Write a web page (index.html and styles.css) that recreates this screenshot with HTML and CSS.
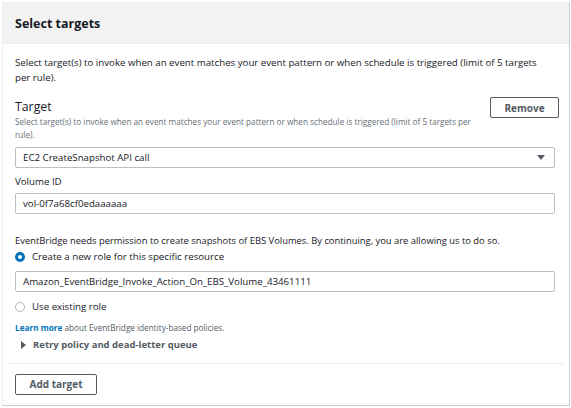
FILE: index.html
```html
<!DOCTYPE html>
<html>
<head>
<meta charset="utf-8">
<link rel="stylesheet" href="styles.css">
</head>
<body>
<div class="card">
  <div class="card-header">Select targets</div>
  <div class="card-body">
    <p class="intro">Select target(s) to invoke when an event matches your event pattern or when schedule is triggered (limit of 5 targets per rule).</p>
    <div class="target-head">
      <div class="target-text">
        <div class="target-title">Target</div>
        <div class="target-desc">Select target(s) to invoke when an event matches your event pattern or when schedule is triggered (limit of 5 targets per rule).</div>
      </div>
      <button class="btn btn-remove">Remove</button>
    </div>
    <div class="field select">
      <span>EC2 CreateSnapshot API call</span>
      <span class="caret"></span>
    </div>
    <div class="label">Volume ID</div>
    <div class="field input">vol-0f7a68cf0edaaaaaa</div>
    <div class="perm">EventBridge needs permission to create snapshots of EBS Volumes. By continuing, you are allowing us to do so.</div>
    <div class="radio-row new-role"><span class="radio checked"></span>Create a new role for this specific resource</div>
    <div class="field input role-input">Amazon_EventBridge_Invoke_Action_On_EBS_Volume_43461111</div>
    <div class="radio-row existing"><span class="radio"></span>Use existing role</div>
    <div class="learn"><span class="link">Learn more</span> about EventBridge identity-based policies.</div>
    <div class="retry"><span class="tri"></span>Retry policy and dead-letter queue</div>
  </div>
  <div class="card-footer">
    <button class="btn btn-add">Add target</button>
  </div>
</div>
</body>
</html>
```
FILE: styles.css
```css
* { box-sizing: border-box; }
html, body { margin: 0; padding: 0; background: #ffffff; }
body {
  font-family: "Open Sans", "Liberation Sans", sans-serif;
  color: #16191f;
  padding: 2px 0 0 2px;
}
.card {
  width: 568px;
  height: 404px;
  border: 1px solid #eceeee;
  border-right-color: #c9cdce;
  border-bottom-color: #c9cdce;
  background: #fff;
  display: flex;
  flex-direction: column;
}
.card-header {
  background: #f2f2f2;
  height: 41px;
  padding: 0 12px;
  display: flex;
  align-items: center;
  font-weight: 700;
  font-size: 12.5px;
  border-bottom: 1px solid #eaeded;
}
.card-body {
  padding: 11px 12px 0 12px;
}
.intro {
  margin: 0;
  font-size: 9.7px;
  line-height: 15px;
  width: 535px;
}
.target-head {
  display: flex;
  justify-content: space-between;
  align-items: flex-start;
  margin-top: 14px;
}
.target-text { width: 470px; }
.target-title {
  font-size: 12.3px;
  line-height: 16px;
}
.target-desc {
  font-size: 8.2px;
  line-height: 13px;
  color: #687078;
}
.btn {
  font-family: "Open Sans", "Liberation Sans", sans-serif;
  background: #fff;
  border: 1px solid #545b64;
  border-radius: 2px;
  font-weight: 700;
  font-size: 10px;
  color: #545b64;
  padding: 0;
}
.btn-remove {
  width: 69px;
  height: 21px;
  margin-top: -2px;
  margin-right: -2px;
}
.field {
  width: 540px;
  height: 21px;
  border: 1px solid #b9c0c1;
  border-radius: 2px;
  font-size: 9.7px;
  padding: 0 7px;
  display: flex;
  align-items: center;
}
.select {
  margin-top: 6px;
  justify-content: space-between;
}
.caret {
  width: 0; height: 0;
  border-left: 4px solid transparent;
  border-right: 4px solid transparent;
  border-top: 5px solid #545b64;
  margin-right: 2px;
}
.label {
  font-size: 9.7px;
  line-height: 14px;
  margin-top: 7px;
}
.input { margin-top: 4px; }
.perm {
  font-size: 9.4px;
  line-height: 14px;
  margin-top: 20px;
}
.radio-row {
  display: flex;
  align-items: center;
  font-size: 9.7px;
  line-height: 16px;
}
.new-role { margin-top: 1px; }
.radio {
  width: 10px;
  height: 10px;
  border-radius: 50%;
  border: 1px solid #aab7b8;
  margin-left: 0;
  margin-right: 7px;
  background: #fff;
}
.radio.checked {
  border: 3px solid #0073bb;
}
.role-input { margin-top: 6px; }
.existing { margin-top: 7px; }
.learn {
  font-size: 8.2px;
  color: #545b64;
  margin-top: 7px;
  line-height: 12px;
}
.link { color: #0073bb; font-weight: 700; }
.retry {
  display: flex;
  align-items: center;
  font-weight: 700;
  font-size: 9.5px;
  color: #545b64;
  margin-top: 4px;
  line-height: 14px;
}
.tri {
  width: 0; height: 0;
  border-top: 4px solid transparent;
  border-bottom: 4px solid transparent;
  border-left: 5px solid #545b64;
  margin-left: 6px;
  margin-right: 7px;
}
.card-footer {
  margin: 11px 6px 0 5px;
  border-top: 1px solid #eaeded;
  padding: 7px 7px 0;
}
.btn-add {
  width: 82px;
  height: 21px;
}
```
